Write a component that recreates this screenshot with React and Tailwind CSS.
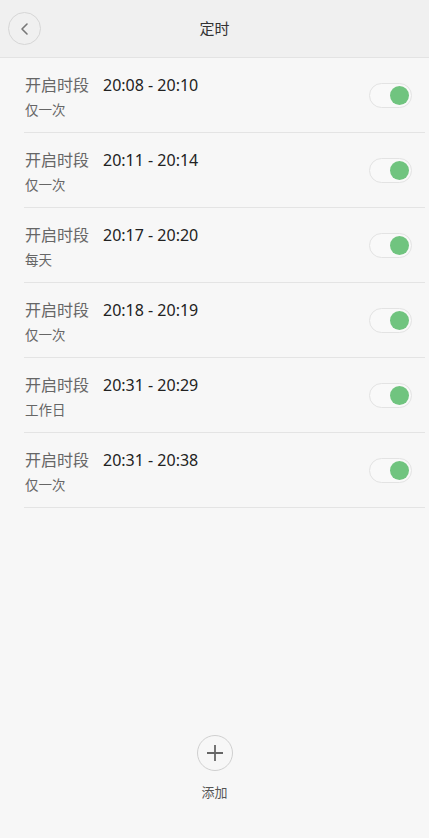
import React from "react";

const rows = [
  ["20:08 - 20:10", "仅一次"],
  ["20:11 - 20:14", "仅一次"],
  ["20:17 - 20:20", "每天"],
  ["20:18 - 20:19", "仅一次"],
  ["20:31 - 20:29", "工作日"],
  ["20:31 - 20:38", "仅一次"],
];

const font = { fontFamily: '"Noto Sans", "Noto Sans CJK SC", sans-serif' };

export default function App() {
  return (
    <div className="w-[429px] h-[838px] bg-[#f7f7f7] flex flex-col" style={font}>
      <div className="h-[58px] bg-[#f0f0f0] border-b border-[#e3e3e3] flex items-center relative shrink-0">
        <div className="ml-[8px] w-[33px] h-[33px] rounded-full border border-[#d6d6d6] flex items-center justify-center">
          <svg width="14" height="14" viewBox="0 0 14 14" fill="none">
            <path d="M9 2 L4 7 L9 12" stroke="#777" strokeWidth="1.6" strokeLinecap="round" strokeLinejoin="round" />
          </svg>
        </div>
        <div className="absolute left-0 right-0 text-center text-[15px] text-[#333] pointer-events-none">定时</div>
      </div>
      <div className="flex flex-col">
        {rows.map(([t, s], i) => (
          <div key={i} className="ml-[24px] mr-[4px] h-[75px] border-b border-[#e4e4e4] flex items-center">
            <div className="flex-1 flex flex-col self-start pt-[14px]">
              <div className="flex items-center h-[26px]">
                <span className="text-[16px] text-[#666] w-[79px] pl-[1px]">开启时段</span>
                <span className="text-[16px] text-[#222]">{t}</span>
              </div>
              <div className="text-[13.5px] leading-[18px] text-[#666] mt-[3px] pl-[1px]">{s}</div>
            </div>
            <div className="mr-[13px] w-[43px] h-[25px] rounded-full border border-[#e3e3e3] bg-[#f9f9f9] flex items-center justify-end pr-[2px]">
              <div className="w-[19px] h-[19px] rounded-full bg-[#70c47f]" />
            </div>
          </div>
        ))}
      </div>
      <div className="flex-1" />
      <div className="flex flex-col items-center pb-[36px]">
        <div className="w-[36px] h-[36px] rounded-full border border-[#d0d0d0] flex items-center justify-center">
          <svg width="20" height="20" viewBox="0 0 20 20">
            <path d="M10 2 V18 M2 10 H18" stroke="#666" strokeWidth="1.8" />
          </svg>
        </div>
        <div className="text-[13px] text-[#555] mt-[12px]">添加</div>
      </div>
    </div>
  );
}
